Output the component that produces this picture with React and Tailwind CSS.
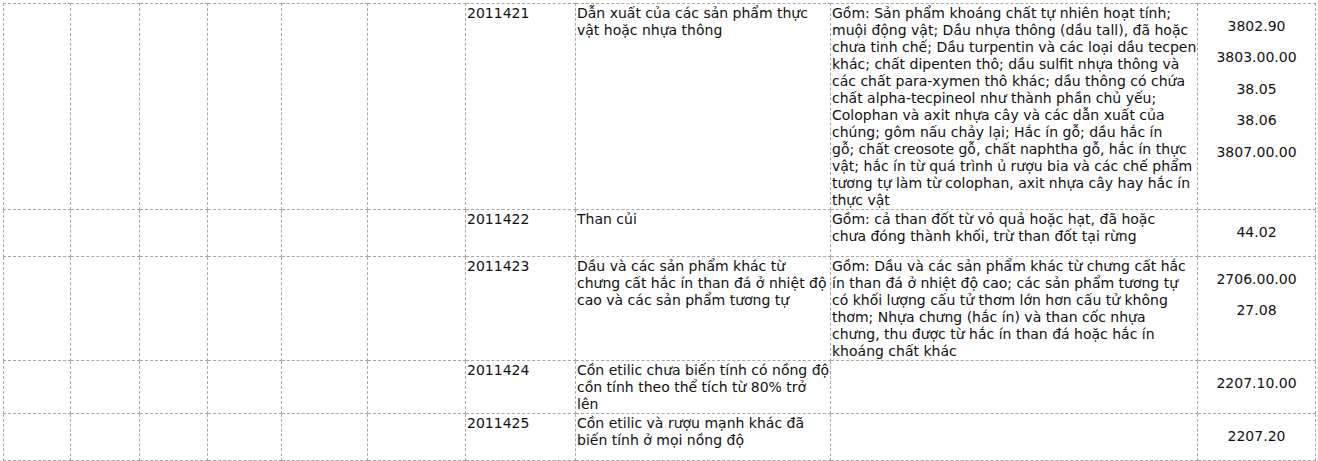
import React from "react";

const widths = [67, 69, 68, 74, 86, 98, 110, 255, 367, 118];

const rows = [
  {
    code: "2011421",
    name: ["Dẫn xuất của các sản phẩm thực", "vật hoặc nhựa thông"],
    desc: [
      "Gồm: Sản phẩm khoáng chất tự nhiên hoạt tính;",
      "muội động vật; Dầu nhựa thông (dầu tall), đã hoặc",
      "chưa tinh chế; Dầu turpentin và các loại dầu tecpen",
      "khác; chất dipenten thô; dầu sulfit nhựa thông và",
      "các chất para-xymen thô khác; dầu thông có chứa",
      "chất alpha-tecpineol như thành phần chủ yếu;",
      "Colophan và axit nhựa cây và các dẫn xuất của",
      "chúng; gôm nấu chảy lại; Hắc ín gỗ; dầu hắc ín",
      "gỗ; chất creosote gỗ, chất naphtha gỗ, hắc ín thực",
      "vật; hắc ín từ quá trình ủ rượu bia và các chế phẩm",
      "tương tự làm từ colophan, axit nhựa cây hay hắc ín",
      "thực vật",
    ],
    values: ["3802.90", "3803.00.00", "38.05", "38.06", "3807.00.00"],
  },
  {
    code: "2011422",
    name: ["Than củi"],
    desc: [
      "Gồm: cả than đốt từ vỏ quả hoặc hạt, đã hoặc",
      "chưa đóng thành khối, trừ than đốt tại rừng",
    ],
    values: ["44.02"],
  },
  {
    code: "2011423",
    name: [
      "Dầu và các sản phẩm khác từ",
      "chưng cất hắc ín than đá ở nhiệt độ",
      "cao và các sản phẩm tương tự",
    ],
    desc: [
      "Gồm: Dầu và các sản phẩm khác từ chưng cất hắc",
      "ín than đá ở nhiệt độ cao; các sản phẩm tương tự",
      "có khối lượng cấu tử thơm lớn hơn cấu tử không",
      "thơm; Nhựa chưng (hắc ín) và than cốc nhựa",
      "chưng, thu được từ hắc ín than đá hoặc hắc ín",
      "khoáng chất khác",
    ],
    values: ["2706.00.00", "27.08"],
  },
  {
    code: "2011424",
    name: [
      "Cồn etilic chưa biến tính có nồng độ",
      "cồn tính theo thể tích từ 80% trở",
      "lên",
    ],
    desc: [],
    values: ["2207.10.00"],
  },
  {
    code: "2011425",
    name: ["Cồn etilic và rượu mạnh khác đã", "biến tính ở mọi nồng độ"],
    desc: [],
    values: ["2207.20"],
  },
];

const base =
  "border border-dashed border-[#a8a8a8] align-top px-[1px] overflow-visible";
const cell = base + " pt-[1px] pb-0";
const valueCell = base + " pt-0 pb-[1px] text-center";

function Lines({ lines }) {
  return lines.map((l, i) => (
    <span key={i} className="block whitespace-nowrap">
      {l}
    </span>
  ));
}

export default function App() {
  return (
    <div className="bg-white w-[1318px] h-[461px] overflow-hidden pl-[3px] pt-[3px]">
      <table className="table-fixed border-collapse w-[1312px] font-['DejaVu_Sans','Verdana',sans-serif] text-[14px] leading-[17px] text-[#111]">
        <colgroup>
          {widths.map((w, i) => (
            <col key={i} style={{ width: w }} />
          ))}
        </colgroup>
        <tbody>
          {rows.map((r) => (
            <tr key={r.code}>
              <td className={cell}></td>
              <td className={cell}></td>
              <td className={cell}></td>
              <td className={cell}></td>
              <td className={cell}></td>
              <td className={cell}></td>
              <td className={cell}>{r.code}</td>
              <td className={cell}>
                <Lines lines={r.name} />
              </td>
              <td className={cell}>
                <Lines lines={r.desc} />
              </td>
              <td className={valueCell}>
                {r.values.map((v) => (
                  <p key={v} className="mt-[13.5px] mb-[14.5px]">
                    {v}
                  </p>
                ))}
              </td>
            </tr>
          ))}
        </tbody>
      </table>
    </div>
  );
}
